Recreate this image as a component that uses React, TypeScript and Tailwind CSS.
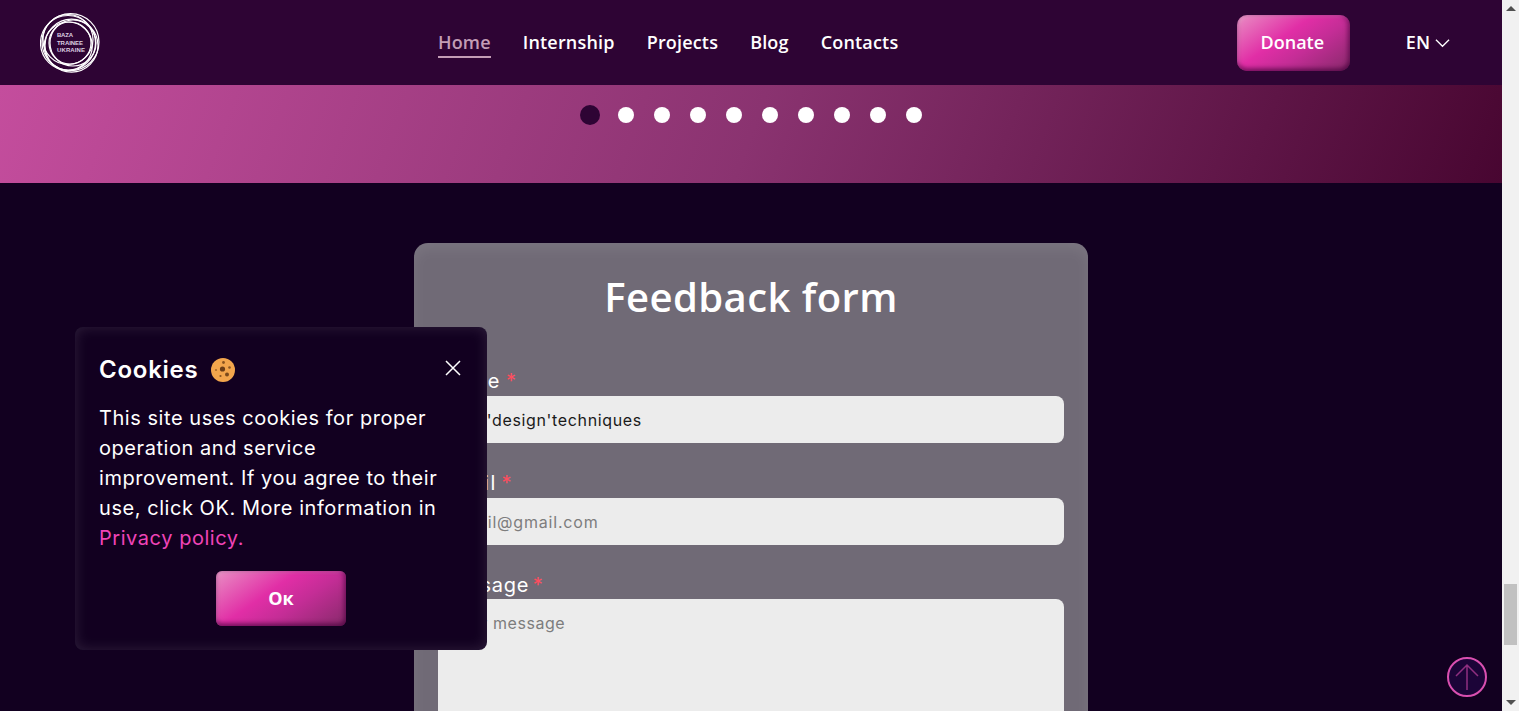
const navLinks = ['Home', 'Internship', 'Projects', 'Blog', 'Contacts'];
const dots = [0, 1, 2, 3, 4, 5, 6, 7, 8, 9];

const pinkButton =
  'bg-[linear-gradient(145deg,#e98fc4_0%,#e12ea6_40%,#c42d96_62%,#862a6a_100%)] shadow-[inset_0_-3px_4px_rgba(70,0,60,0.55),inset_-3px_0_4px_rgba(70,0,60,0.35),inset_2px_2px_3px_rgba(255,255,255,0.15)] text-white';

function Logo() {
  const rings = [
    { r: 21, cx: 30, cy: 30 },
    { r: 23, cx: 33, cy: 30 },
    { r: 24, cx: 28.25, cy: 33 },
    { r: 25, cx: 28, cy: 26.5 },
    { r: 26.5, cx: 31.5, cy: 32.6 },
    { r: 27.5, cx: 28, cy: 30 },
    { r: 28.5, cx: 30.5, cy: 29.1 },
  ];
  return (
    <svg width="60" height="60" viewBox="0 0 60 60" fill="none">
      {rings.map((c, i) => (
        <circle key={i} cx={c.cx} cy={c.cy} r={c.r} stroke="#fff" strokeWidth="1.2" />
      ))}
      <g fill="#ddd0e0" fontFamily="'Liberation Sans', sans-serif" fontSize="6" fontWeight="700">
        <text x="17" y="23.5" textLength="16">BAZA</text>
        <text x="17" y="31.5" textLength="26">TRAINEE</text>
        <text x="17" y="39" textLength="28">UKRAINE</text>
      </g>
    </svg>
  );
}

function CookieIcon() {
  return (
    <svg width="24" height="24" viewBox="0 0 24 24">
      <circle cx="12" cy="12" r="12" fill="#f2a54c" />
      <circle cx="11.5" cy="11" r="2.6" fill="#6b3d17" />
      <circle cx="12.5" cy="4.5" r="1.4" fill="#8a5420" />
      <circle cx="18.5" cy="9.5" r="1.3" fill="#8a5420" />
      <circle cx="16" cy="16.5" r="2" fill="#7a4a1c" />
      <circle cx="9.5" cy="18" r="1.1" fill="#8a5420" />
      <circle cx="5" cy="12" r="1.1" fill="#a86a2a" />
    </svg>
  );
}

function Label({ text, className }: { text: string; className: string }) {
  return (
    <p className={`text-[20px] leading-[24px] text-white ${className}`}>
      {text} <span className="text-[#ff4d5e] -ml-[3px]">*</span>
    </p>
  );
}

function Field({ label, labelClass, value, placeholder }: { label: string; labelClass: string; value?: string; placeholder?: string }) {
  return (
    <div>
      <Label text={label} className={labelClass} />
      <div
        className={`mt-[3px] h-[47px] rounded-[8px] bg-[#ececec] flex items-center text-[16px] ${
          value ? 'pl-[13px] text-[#1a1a1a] tracking-[0.65px]' : 'pl-[15px] text-[#7d7d7d] tracking-[0.8px]'
        }`}
      >
        {value ?? placeholder}
      </div>
    </div>
  );
}

export default function App() {
  return (
    <div className="relative flex h-[711px] overflow-hidden font-['Inter',sans-serif] bg-[#120020]">
      <div className="w-[1502px] shrink-0">
        {/* Header */}
        <header className="h-[85px] bg-[#2e0434] pl-[40px] pr-[52px] flex items-center font-['Open_Sans',sans-serif] text-white">
          <Logo />
          <nav className="ml-[338px] flex items-center gap-[32px] text-[18px] font-semibold tracking-[0.18px] pt-[2px]">
            {navLinks.map((link, i) => (
              <a
                key={link}
                className={i === 0 ? 'text-[#c39db5] border-b-2 border-[#c39db5] leading-[27px]' : 'leading-[27px] border-b-2 border-transparent'}
              >
                {link}
              </a>
            ))}
          </nav>
          <button className={`ml-auto w-[113px] h-[56px] rounded-[10px] text-[18px] font-semibold pr-[2px] ${pinkButton}`}>
            Donate
          </button>
          <div className="ml-[56px] flex items-center gap-[5px] text-[18px] font-semibold">
            EN
            <svg width="15" height="10" viewBox="0 0 16 10" fill="none" stroke="#fff" strokeWidth="1.4">
              <path d="M1 1.5 8 8.5 15 1.5" />
            </svg>
          </div>
        </header>

        {/* Slider pagination band */}
        <section className="h-[98px] bg-[linear-gradient(110deg,#c44d9d_0%,#8a3370_50%,#480631_100%)] pt-[20px] pl-[580px]">
          <div className="flex items-center gap-[20px] h-[20px]">
            {dots.map((d) => (
              <span
                key={d}
                className={d === 0 ? 'w-[20px] h-[20px] rounded-full bg-[#2e0434] -mr-[2px]' : 'w-[16px] h-[16px] rounded-full bg-white'}
              />
            ))}
          </div>
        </section>

        {/* Form */}
        <section className="pt-[60px] flex justify-center">
          <div className="w-[674px] h-[600px] rounded-[14px] bg-[#706a76] shadow-[inset_0_6px_14px_rgba(255,255,255,0.08)] px-[24px] pt-[25px]">
            <h2 className="text-center font-['Open_Sans',sans-serif] text-[40px] leading-[58px] font-semibold text-white tracking-[0.45px]">
              Feedback form
            </h2>
            <div className="mt-[43px] flex flex-col gap-[28px]">
              <Field label="Name" labelClass="tracking-[2px]" value="Web'design'techniques" />
              <Field label="Email" labelClass="tracking-[1.75px]" placeholder="email@gmail.com" />
              <div>
                <Label text="Message" className="tracking-[0.75px]" />
                <div className="mt-[2px] h-[200px] rounded-[8px] bg-[#ececec] pl-[13px] pt-[12px] text-[16px] tracking-[0.55px] text-[#7d7d7d]">
                  Your message
                </div>
              </div>
            </div>
          </div>
        </section>
      </div>

      {/* Scrollbar */}
      <div className="w-[17px] shrink-0 bg-[#f1f1f1] flex flex-col items-center justify-between pt-[6px] pb-[6px]">
        <span className="w-0 h-0 border-x-[5px] border-x-transparent border-b-[5px] border-b-[#505050]" />
        <div className="flex-1 w-full relative">
          <div className="absolute left-[2px] top-[573px] w-[13px] h-[61px] bg-[#c1c1c1]" />
        </div>
        <span className="w-0 h-0 border-x-[5px] border-x-transparent border-t-[5px] border-t-[#505050]" />
      </div>

      {/* Cookies popup */}
      <div className="absolute left-[75px] top-[327px] w-[412px] h-[323px] rounded-[8px] bg-[#120020] shadow-[inset_0_0_14px_rgba(255,255,255,0.12)] px-[24px] pt-[24px] text-white">
        <div className="flex items-center h-[38px]">
          <span className="text-[24px] font-semibold tracking-[0.75px]">Cookies</span>
          <span className="ml-[13px] flex"><CookieIcon /></span>
          <svg className="ml-auto mr-[2px] -mt-[4px]" width="16" height="16" viewBox="0 0 16 16" stroke="#fff" strokeWidth="1.5">
            <path d="M1 1 15 15M15 1 1 15" />
          </svg>
        </div>
        <p className="mt-[14px] w-[352px] text-[20px] leading-[30px] tracking-[0.55px]">
          This site uses cookies for proper operation and service improvement. If you agree to their use, click OK. More information in{' '}
          <span className="text-[#f044b8]">Privacy policy.</span>
        </p>
        <button className={`block mx-auto mt-[18px] w-[130px] h-[55px] rounded-[6px] text-[18px] font-bold font-['Open_Sans',sans-serif] ${pinkButton}`}>
          Ок
        </button>
      </div>

      {/* Scroll to top */}
      <button className="absolute left-[1447px] top-[657px] w-[40px] h-[40px] rounded-full border-2 border-[#d94fb0] bg-[#1c0438] flex items-center justify-center">
        <svg width="24" height="30" viewBox="0 0 24 30" fill="none" stroke="#8f2f80" strokeWidth="1.5">
          <path d="M12 28V3M1 14 12 3 23 14" />
        </svg>
      </button>
    </div>
  );
}
